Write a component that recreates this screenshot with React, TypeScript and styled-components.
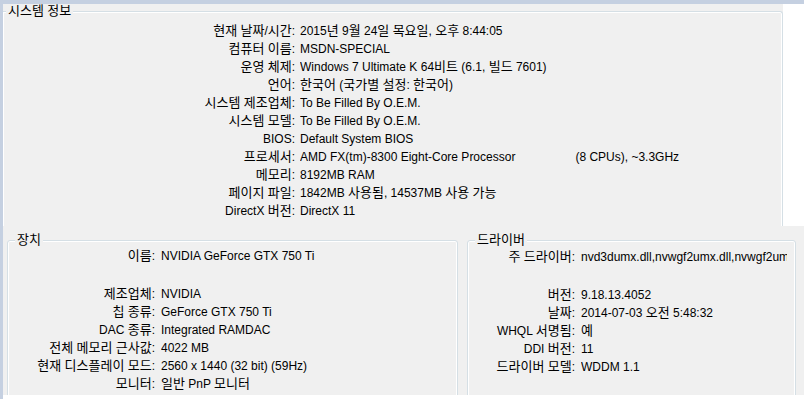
import React from "react";
import styled, { createGlobalStyle } from "styled-components";

const GlobalStyle = createGlobalStyle`
  html, body {
    margin: 0;
    padding: 0;
    background: #ffffff;
  }
  body {
    font-family: "Liberation Sans", "Noto Sans CJK KR", sans-serif;
    font-size: 12px;
    color: #000000;
  }
`;

type Row = { label: string; value: string; extra?: string; spaceAfter?: boolean };

const systemRows: Row[] = [
  { label: "현재 날짜/시간:", value: "2015년 9월 24일 목요일, 오후 8:44:05" },
  { label: "컴퓨터 이름:", value: "MSDN-SPECIAL" },
  { label: "운영 체제:", value: "Windows 7 Ultimate K 64비트 (6.1, 빌드 7601)" },
  { label: "언어:", value: "한국어 (국가별 설정: 한국어)" },
  { label: "시스템 제조업체:", value: "To Be Filled By O.E.M." },
  { label: "시스템 모델:", value: "To Be Filled By O.E.M." },
  { label: "BIOS:", value: "Default System BIOS" },
  {
    label: "프로세서:",
    value: "AMD FX(tm)-8300 Eight-Core Processor",
    extra: "(8 CPUs), ~3.3GHz",
  },
  { label: "메모리:", value: "8192MB RAM" },
  { label: "페이지 파일:", value: "1842MB 사용됨, 14537MB 사용 가능" },
  { label: "DirectX 버전:", value: "DirectX 11" },
];

const deviceRows: Row[] = [
  { label: "이름:", value: "NVIDIA GeForce GTX 750 Ti", spaceAfter: true },
  { label: "제조업체:", value: "NVIDIA" },
  { label: "칩 종류:", value: "GeForce GTX 750 Ti" },
  { label: "DAC 종류:", value: "Integrated RAMDAC" },
  { label: "전체 메모리 근사값:", value: "4022 MB" },
  { label: "현재 디스플레이 모드:", value: "2560 x 1440 (32 bit) (59Hz)" },
  { label: "모니터:", value: "일반 PnP 모니터" },
];

const driverRows: Row[] = [
  {
    label: "주 드라이버:",
    value: "nvd3dumx.dll,nvwgf2umx.dll,nvwgf2umx.dll",
    spaceAfter: true,
  },
  { label: "버전:", value: "9.18.13.4052" },
  { label: "날짜:", value: "2014-07-03 오전 5:48:32" },
  { label: "WHQL 서명됨:", value: "예" },
  { label: "DDI 버전:", value: "11" },
  { label: "드라이버 모델:", value: "WDDM 1.1" },
];

// Dotum draws hangul a touch wider than the latin run, so hangul gets its own span
const Text = ({ children }: { children: string }) => (
  <>
    {children.split(/([\u3131-\uD7A3]+)/).map((part, i) =>
      i % 2 === 1 ? <Hangul key={i}>{part}</Hangul> : part
    )}
  </>
);

const InfoList = ({
  rows,
  labelWidth,
  gap,
}: {
  rows: Row[];
  labelWidth: number;
  gap: number;
}) => (
  <Rows>
    {rows.map((r) => (
      <InfoRow
        key={r.label}
        $labelWidth={labelWidth}
        $gap={gap}
        $spaceAfter={r.spaceAfter}
      >
        <Label>
          <Text>{r.label}</Text>
        </Label>
        <Value>
          <Text>{r.value}</Text>
          {r.extra ? <Extra>{r.extra}</Extra> : null}
        </Value>
      </InfoRow>
    ))}
  </Rows>
);

export default function App() {
  return (
    <>
      <GlobalStyle />
      <Window>
        <EdgeStrip />
        <Main>
          <TopBand />
          <SystemArea>
            <SystemGroup>
              <Title $offset={3}>
                <Text>시스템 정보</Text>
              </Title>
              <SystemBody>
                <InfoList rows={systemRows} labelWidth={292} gap={5} />
              </SystemBody>
            </SystemGroup>
          </SystemArea>
          <LowerArea>
            <Group $width={451}>
              <Title $offset={7}>
                <Text>장치</Text>
              </Title>
              <InfoList rows={deviceRows} labelWidth={147} gap={6} />
            </Group>
            <Group $width={329}>
              <Title $offset={7}>
                <Text>드라이버</Text>
              </Title>
              <DriverBody>
                <InfoList rows={driverRows} labelWidth={107} gap={6} />
              </DriverBody>
            </Group>
          </LowerArea>
          <BottomGap />
        </Main>
      </Window>
    </>
  );
}

const Window = styled.div`
  display: flex;
  width: 804px;
  height: 399px;
  overflow: hidden;
  background: #ffffff;
`;

const EdgeStrip = styled.div`
  flex: none;
  width: 3px;
  background: #c5d0e1;
`;

const Main = styled.div`
  flex: 1;
  min-width: 0;
  display: flex;
  flex-direction: column;
`;

const TopBand = styled.div`
  flex: none;
  height: 4px;
  background: #c5d0e1;
`;

const SystemArea = styled.div`
  flex: none;
  width: 780px;
  height: 222px;
  background: #f0f0f0;
  overflow: hidden;
`;

const LowerArea = styled.div`
  flex: none;
  height: 169px;
  display: flex;
  gap: 9px;
  padding: 7px 0 0 4px;
  box-sizing: border-box;
  background: #f0f0f0;
  overflow: hidden;
`;

const BottomGap = styled.div`
  flex: 1;
  background: #ffffff;
`;

const Group = styled.fieldset<{ $width: number }>`
  flex: none;
  box-sizing: border-box;
  width: ${(p) => p.$width}px;
  height: 220px;
  margin: 0;
  padding: 0;
  min-width: 0;
  border: 1px solid #d5dfe5;
  border-radius: 3px;
  box-shadow: inset 0 0 0 1px #ffffff;
`;

const SystemGroup = styled(Group).attrs({ $width: 780 })`
  height: 260px;
  border-left: none;
  border-bottom: none;
  border-radius: 0 3px 0 0;
`;

const Title = styled.legend<{ $offset: number }>`
  margin-left: ${(p) => p.$offset}px;
  padding: 0 2px;
  line-height: 14px;
  background: #f0f0f0;
`;

const Hangul = styled.span`
  font-size: 13px;
  line-height: 1;
`;

const SystemBody = styled.div`
  padding-top: 4px;
`;

const DriverBody = styled.div`
  padding-top: 1px;
  padding-right: 8px;
`;

const Rows = styled.div`
  display: flex;
  flex-direction: column;
`;

const InfoRow = styled.div<{ $labelWidth: number; $gap: number; $spaceAfter?: boolean }>`
  display: grid;
  grid-template-columns: ${(p) => p.$labelWidth}px minmax(0, 1fr);
  column-gap: ${(p) => p.$gap}px;
  height: 18px;
  line-height: 18px;
  margin-bottom: ${(p) => (p.$spaceAfter ? 20 : 0)}px;
`;

const Label = styled.span`
  text-align: right;
  white-space: nowrap;
`;

const Value = styled.span`
  white-space: nowrap;
  overflow: hidden;
`;

const Extra = styled.span`
  margin-left: 60px;
`;
